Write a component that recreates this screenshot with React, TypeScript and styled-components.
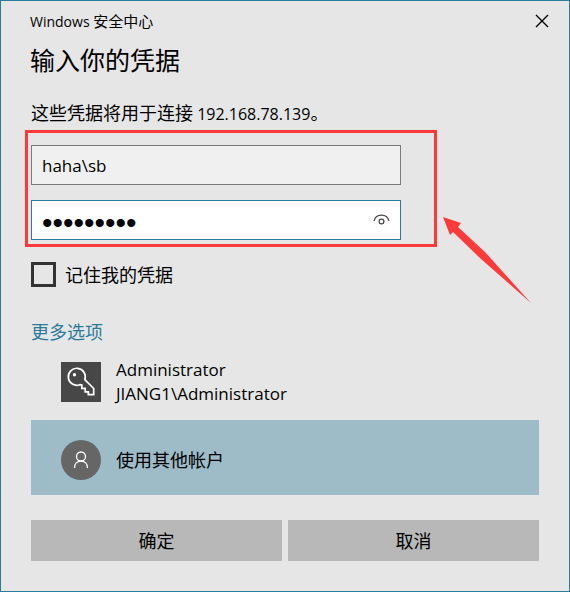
import React from 'react';
import styled, { createGlobalStyle } from 'styled-components';

const accent = '#2b7b9b';
const ink = '#000';
const marker = '#fc3a3a';

const GlobalStyle = createGlobalStyle`
  * {
    box-sizing: border-box;
  }
  body {
    margin: 0;
    background: #e6e6e6;
    color: ${ink};
    font-family: 'Open Sans', 'Noto Sans CJK SC', sans-serif;
    font-size: 17px;
    font-weight: 400;
    line-height: 24px;
  }
  button,
  input {
    font: inherit;
    color: inherit;
  }
`;

const Dialog = styled.main`
  display: flex;
  flex-direction: column;
  min-height: 100vh;
  padding: 0 30px 30px;
  border: 1px solid ${accent};
`;

const TitleBar = styled.header`
  display: flex;
  align-items: center;
  justify-content: space-between;
  height: 40px;
  margin: 0 -18px 0 -1px;
  font-size: 15px;
`;

const CloseButton = styled.button`
  display: grid;
  place-items: center;
  width: 30px;
  height: 30px;
  padding: 0;
  border: 0;
  background: none;
`;

const Heading = styled.h1`
  margin: 0 0 0 -1px;
  font-size: 25px;
  font-weight: inherit;
  line-height: 38px;
`;

const Message = styled.p`
  margin: 22px 0 19px;
  font-size: 18px;
`;

const Latin = styled.span<{ $small?: boolean }>`
  font-size: ${p => (p.$small ? 14 : 16)}px;
`;

const Fields = styled.div`
  position: relative;
  display: grid;
  grid-template-columns: minmax(0, 1fr);
  gap: 15px;
  width: calc(100% - 138px);
`;

const Field = styled.label<{ $active?: boolean }>`
  display: flex;
  align-items: center;
  height: 40px;
  padding: 0 10px;
  border: 1px solid ${p => (p.$active ? accent : '#7a7a7a')};
  background: ${p => (p.$active ? '#fff' : '#f0f0f0')};
`;

const TextInput = styled.input`
  flex: 1;
  min-width: 0;
  height: 38px;
  padding: 0;
  border: 0;
  outline: 0;
  background: transparent;

  &[type='password'] {
    padding: 5px 0 0;
    font-family: 'Liberation Sans', sans-serif;
    font-size: 30px;
  }
`;

const RevealButton = styled.button`
  display: flex;
  padding: 0;
  border: 0;
  background: none;
`;

const Highlight = styled.div`
  position: absolute;
  inset: -15px -36px -7px -6px;
  border: 3px solid ${marker};
  pointer-events: none;
`;

const Arrow = styled.svg`
  position: absolute;
  left: calc(100% + 42px);
  top: 72px;
  pointer-events: none;
`;

const Remember = styled.label`
  display: flex;
  align-items: center;
  gap: 9px;
  margin-top: 22px;
  font-size: 18px;
`;

const Checkbox = styled.input`
  appearance: none;
  width: 25px;
  height: 25px;
  margin: 0;
  border: 3px solid #333;

  &:checked {
    background: ${accent};
  }
`;

const MoreLink = styled.a`
  align-self: flex-start;
  margin-top: 33px;
  color: ${accent};
  font-size: 18px;
  text-decoration: none;
`;

const Accounts = styled.div`
  display: flex;
  flex-direction: column;
  margin-top: 8px;
`;

const Account = styled.button<{ $selected?: boolean }>`
  display: flex;
  align-items: center;
  gap: 15px;
  height: ${p => (p.$selected ? 75 : 68)}px;
  padding: ${p => (p.$selected ? '4px 30px 0' : '0 30px 8px')};
  border: 0;
  background: ${p => (p.$selected ? '#9dbcc8' : 'transparent')};
  font-size: ${p => (p.$selected ? 18 : 17)}px;
  text-align: left;
`;

const Tile = styled.span<{ $round?: boolean }>`
  display: grid;
  place-items: center;
  width: 40px;
  height: 40px;
  border-radius: ${p => (p.$round ? '50%' : 0)};
  background: ${p => (p.$round ? '#666' : '#474747')};
`;

const Line = styled.span`
  display: block;
`;

const Actions = styled.footer`
  display: grid;
  grid-template-columns: 1fr 1fr;
  gap: 6px;
  margin-top: 25px;
`;

const ActionButton = styled.button`
  height: 41px;
  padding: 0;
  border: 0;
  background: #b8b8b8;
  font-size: 18px;
`;

const CloseIcon = () => (
  <svg width="14" height="14" viewBox="0 0 14 14" fill="none" stroke="#000" strokeWidth="1.4">
    <path d="M1 1l12 12M13 1L1 13" />
  </svg>
);

const EyeIcon = () => (
  <svg width="17" height="14" viewBox="0 0 17 14" fill="none" stroke="#444" strokeWidth="1.2">
    <path d="M1 8C2 4.200 5 2.200 8.500 2.200S15 4.200 16 8" />
    <circle cx="8.500" cy="8.500" r="2.400" />
  </svg>
);

const KeyIcon = () => (
  <svg width="40" height="40" viewBox="0 0 40 40" fill="none" stroke="#fff" strokeWidth="1.700">
    <path d="M23.800 17.600L32.700 26.500V32.700H27.300V29.800H24.200V26.400H20.800V23L18.800 22.700A8.500 8.500 0 1 1 23.800 17.600Z" />
    <circle cx="13.500" cy="12.800" r="1.700" fill="#fff" stroke="none" />
  </svg>
);

const PersonIcon = () => (
  <svg width="40" height="40" viewBox="0 0 40 40" fill="none" stroke="#fff" strokeWidth="1.300">
    <circle cx="20" cy="16.500" r="4.500" />
    <path d="M13.500 28C13.500 23.800 16.200 21.100 20 21.100S26.500 23.800 26.500 28" />
  </svg>
);

export default function App() {
  return (
    <>
      <GlobalStyle />
      <Dialog>
        <TitleBar>
          <span>
            <Latin $small>Windows </Latin>安全中心
          </span>
          <CloseButton aria-label="关闭">
            <CloseIcon />
          </CloseButton>
        </TitleBar>
        <Heading>输入你的凭据</Heading>
        <Message>
          这些凭据将用于连接<Latin> 192.168.78.139</Latin>。
        </Message>
        <Fields>
          <Field>
            <TextInput type="text" aria-label="用户名" defaultValue="haha\sb" />
          </Field>
          <Field $active>
            <TextInput type="password" aria-label="密码" defaultValue="123456789" />
            <RevealButton aria-label="显示密码">
              <EyeIcon />
            </RevealButton>
          </Field>
          <Highlight />
          <Arrow width="88" height="86" viewBox="0 0 88 86" fill={marker}>
            <path d="M0 0L18 6L15 10L42 35L88 86L38 42L10 15L7 18Z" />
          </Arrow>
        </Fields>
        <Remember>
          <Checkbox type="checkbox" />
          记住我的凭据
        </Remember>
        <MoreLink href="#more">更多选项</MoreLink>
        <Accounts id="more">
          <Account>
            <Tile>
              <KeyIcon />
            </Tile>
            <span>
              <Line>Administrator</Line>
              <Line>JIANG1\Administrator</Line>
            </span>
          </Account>
          <Account $selected>
            <Tile $round>
              <PersonIcon />
            </Tile>
            <span>使用其他帐户</span>
          </Account>
        </Accounts>
        <Actions>
          <ActionButton>确定</ActionButton>
          <ActionButton>取消</ActionButton>
        </Actions>
      </Dialog>
    </>
  );
}
